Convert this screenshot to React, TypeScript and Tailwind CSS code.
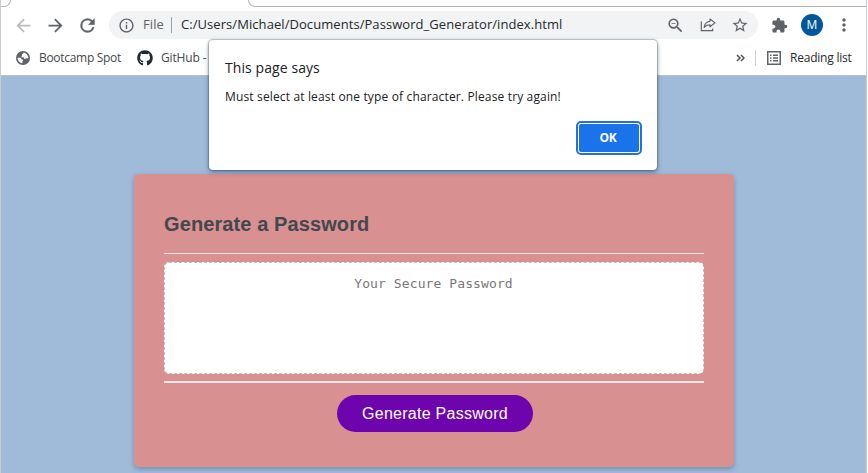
import React from "react";
import { MdArrowBack, MdArrowForward, MdInfoOutline, MdZoomOut, MdStarBorder, MdExtension, MdMoreVert } from "react-icons/md";
import { FaGithub } from "react-icons/fa";

const ui = "font-['Open_Sans','Noto_Sans',sans-serif]";

function RefreshIcon() {
  return (
    <svg width="21" height="21" viewBox="0 0 24 24" fill="currentColor" stroke="currentColor" strokeWidth="0.4">
      <path d="M17.65 6.35A7.95 7.95 0 0 0 12 4a8 8 0 1 0 7.73 10h-2.08A6 6 0 1 1 12 6c1.66 0 3.14.69 4.22 1.78L13 11h7V4z" />
    </svg>
  );
}

function GlobeIcon() {
  return (
    <svg width="14" height="14" viewBox="0 0 14 14" className="ml-[15px]">
      <circle cx="7" cy="7" r="7" fill="#5f6368" />
      <path d="M7.6 1.6C7.9 2.4 6.6 3 6 3.5C5.4 4.1 6.5 4.9 5.9 5.5C5.4 6 4.8 5.7 4.6 6.3H7.2C8.2 6.5 7.9 7.8 8.8 8C9.7 8.2 9.8 7.2 10.7 7.3H12.4C12.3 4.5 10.4 2.1 7.6 1.6Z" fill="#fff" />
      <path d="M1.6 6.8H4C5 7 5.3 7.6 5.3 8.6H6.4C7.4 8.8 7.3 9.9 6.4 10.3V12.3C3.7 12 1.6 9.6 1.6 6.8Z" fill="#fff" />
    </svg>
  );
}

function ShareIcon() {
  return (
    <svg width="16" height="14" viewBox="0 0 16 14" fill="none" stroke="#5f6368" strokeWidth="1.15">
      <path d="M1.3 3.5V12.6H12.7V10.6" />
      <path d="M10 1L15 4.9L10 8.8V6.7C7.4 6.7 5.4 7.6 4.2 9.5C4.4 6.2 6.3 3.8 10 3.2Z" strokeLinejoin="round" />
    </svg>
  );
}

function ReadingListIcon() {
  return (
    <svg width="14" height="14" viewBox="0 0 14 14" className="ml-[11px]" fill="none" stroke="#5f6368" strokeWidth="1.5">
      <path d="M.75 .75H13.25V13.25H.75ZM3 4.25H4.5M6 4.25H11M3 7H4.5M6 7H11M3 9.75H4.5M6 9.75H11" />
    </svg>
  );
}

function TabStrip() {
  return (
    <div className="flex h-[7px] w-full justify-between">
      <div className="h-[7px] w-[10px] rounded-br-[8px] border-r border-b border-[#b4b6b8] bg-[#fcfcfc]" />
      <div className="h-[7px] w-[618px] rounded-bl-[8px] border-b border-l border-[#b0b2b4] bg-[#fcfcfc]" />
    </div>
  );
}

function Toolbar() {
  return (
    <div className="flex h-[33px] w-full items-start pt-1 text-[#5f6368]">
      <div className="flex h-7 w-[108px] shrink-0 items-center gap-[11px] pl-3">
        <MdArrowBack size={21} className="text-[#b9bbbe]" />
        <MdArrowForward size={21} />
        <RefreshIcon />
      </div>
      <div className="flex h-7 w-[649px] shrink-0 items-center rounded-full bg-[#f1f3f4] pl-[9px]">
        <MdInfoOutline size={17} />
        <span className="ml-2 w-[21px] text-[13px] tracking-[0.1px] whitespace-nowrap">File</span>
        <span className="ml-[7px] h-4 w-px bg-[#9da1a5]" />
        <span className="ml-[9px] w-[382px] text-[13px] tracking-[0.065px] whitespace-nowrap text-[#27292c]">
          C:/Users/Michael/Documents/Password_Generator/index.html
        </span>
        <MdZoomOut size={19} className="ml-[103px]" />
        <span className="ml-[15px]"><ShareIcon /></span>
        <MdStarBorder size={18} className="ml-[15px]" />
      </div>
      <div className="flex h-7 items-center">
        <MdExtension size={17} className="ml-[13px]" />
        <span className="ml-[13px] flex h-[22px] w-[22px] items-center justify-center rounded-full bg-[#01579b] text-[12px] text-white">M</span>
        <MdMoreVert size={20} className="ml-[11px]" />
      </div>
    </div>
  );
}

function Bookmarks() {
  return (
    <div className="flex h-[35px] w-full items-center text-[12px] whitespace-nowrap text-[#45484c]">
      <GlobeIcon />
      <span className="ml-[9px] w-[82px] tracking-[-0.3px]">Bootcamp Spot</span>
      <FaGithub size={16} className="ml-4 text-[#24292f]" />
      <span className="ml-2 w-[48px] tracking-[-0.15px]">GitHub -</span>
      <svg width="9" height="8" viewBox="0 0 9 8" className="ml-[527px]" fill="none" stroke="#505357" strokeWidth="1.5">
        <path d="M1 1L4 4L1 7M5 1L8 4L5 7" />
      </svg>
      <span className="ml-[10px] h-4 w-px bg-[#cfd2d5]" />
      <ReadingListIcon />
      <span className="ml-[9px] tracking-[-0.22px] text-[#27292c]">Reading list</span>
    </div>
  );
}

function Dialog() {
  return (
    <div className={`${ui} absolute top-10 left-[209px] h-[130px] w-[448px] rounded-[4px] bg-white pr-[15px] pl-4 text-[#202124] shadow-[0_0_1px_1px_rgba(60,64,67,0.3),0_2px_5px_rgba(40,60,90,0.55)]`}>
      <h2 className="pt-[18px] text-[14px] leading-5 tracking-[0.08px] whitespace-nowrap">This page says</h2>
      <p className="mt-[10px] text-[12px] leading-[18px] tracking-[0.15px] whitespace-nowrap">
        Must select at least one type of character. Please try again!
      </p>
      <div className="mt-[15px] flex justify-end">
        <button className="h-[34px] w-[66px] rounded-[5px] border-2 border-[#2a70d3] bg-white p-px">
          <span className="flex h-full w-full items-center justify-center rounded-[2px] bg-[#1a73e8] pr-0.5 text-[12px] font-bold tracking-[-0.3px] text-white">OK</span>
        </button>
      </div>
    </div>
  );
}

function PasswordCard() {
  return (
    <main className="h-[293px] w-[600px] rounded-[5px] bg-[#d99090] px-[30px] shadow-[0_2px_5px_rgba(50,80,110,0.4)]">
      <h1 className="h-[80px] border-b border-[#f8e9e9] pt-[38px] font-['Liberation_Sans',Arial,sans-serif] text-[20px] leading-6 font-bold tracking-[0.1px] text-[#43474f]">
        Generate a Password
      </h1>
      <div className="mt-2 h-[112px] rounded-[5px] border border-dashed border-[#c4bcbf] bg-white pt-3 pr-px text-center font-['DejaVu_Sans_Mono',monospace] text-[13px] leading-[18px] tracking-[0.1px] text-[#777]">
        Your Secure Password
      </div>
      <div className="mt-[7px] h-[2px] bg-[#fae6e6]" />
      <button className="mt-3 ml-[173px] flex h-[37px] w-[196px] items-center justify-center rounded-full bg-[#6e04ad] font-['Liberation_Sans',Arial,sans-serif] text-[16px] tracking-[0.26px] whitespace-nowrap text-white">
        Generate Password
      </button>
    </main>
  );
}

export default function App() {
  return (
    <div className="relative h-[473px] w-[868px] overflow-hidden bg-white">
      <div className="flex h-full w-[867px] flex-col border-x border-[#c9cdd1]">
        <header className={`${ui} h-[75px] shrink-0`}>
          <TabStrip />
          <Toolbar />
          <Bookmarks />
        </header>
        <section className="flex flex-1 justify-center border-t border-[#b5bfca] bg-[#a0bad9] pt-[98px] pl-px">
          <PasswordCard />
        </section>
      </div>
      <Dialog />
    </div>
  );
}
